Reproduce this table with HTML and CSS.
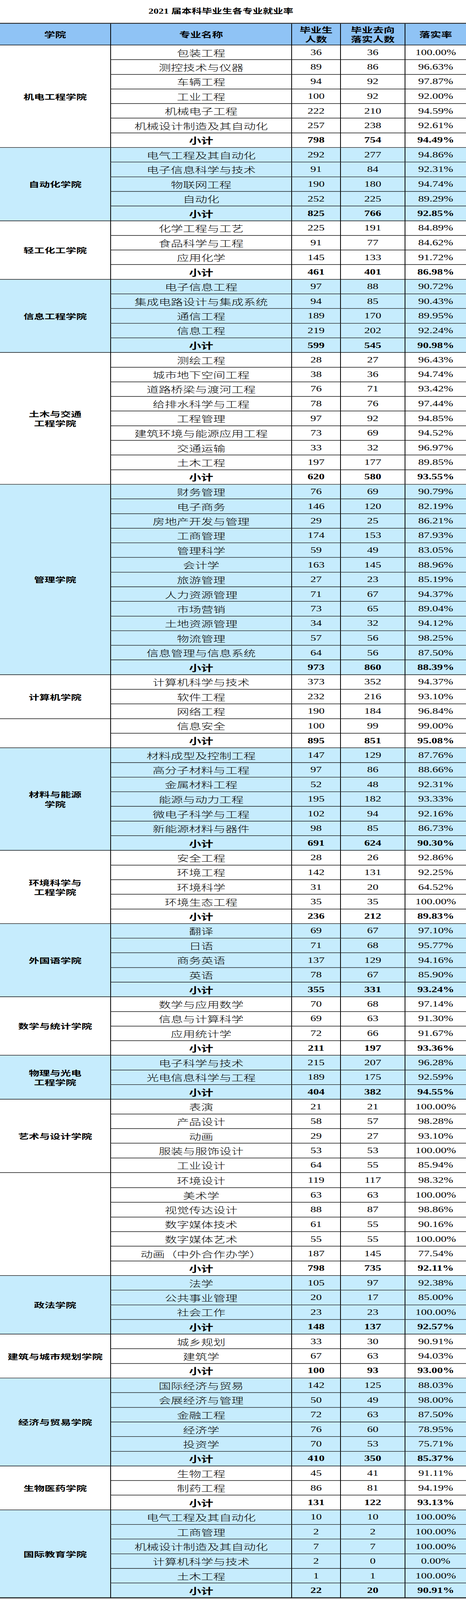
FILE: index.html
```html
<!DOCTYPE html>
<html lang="zh-CN">
<head>
<meta charset="utf-8">
<title>2021 届本科毕业生各专业就业率</title>
<link rel="stylesheet" href="styles.css">
</head>
<body>
<div class="frame">
<div class="page">
  <h1 class="title">2021 届本科毕业生各专业就业率</h1>
  <table class="grid">
    <colgroup>
      <col class="w1"><col class="w2"><col class="w3"><col class="w4"><col class="w5">
    </colgroup>
    <thead>
      <tr class="head">
        <th class="h-college">学院</th>
        <th>专业名称</th>
        <th>毕业生<br>人数</th>
        <th>毕业去向<br>落实人数</th>
        <th>落实率</th>
      </tr>
    </thead>
    <tbody>
      <tr><td class="college" rowspan="7">机电工程学院</td><td class="major">包装工程</td><td class="n">36</td><td class="n">36</td><td class="n">100.00%</td></tr>
      <tr><td class="major">测控技术与仪器</td><td class="n">89</td><td class="n">86</td><td class="n">96.63%</td></tr>
      <tr><td class="major">车辆工程</td><td class="n">94</td><td class="n">92</td><td class="n">97.87%</td></tr>
      <tr><td class="major">工业工程</td><td class="n">100</td><td class="n">92</td><td class="n">92.00%</td></tr>
      <tr><td class="major">机械电子工程</td><td class="n">222</td><td class="n">210</td><td class="n">94.59%</td></tr>
      <tr><td class="major">机械设计制造及其自动化</td><td class="n">257</td><td class="n">238</td><td class="n">92.61%</td></tr>
      <tr class="sub"><td class="major">小计</td><td class="n">798</td><td class="n">754</td><td class="n">94.49%</td></tr>

      <tr class="c"><td class="college" rowspan="5">自动化学院</td><td class="major">电气工程及其自动化</td><td class="n">292</td><td class="n">277</td><td class="n">94.86%</td></tr>
      <tr class="c"><td class="major">电子信息科学与技术</td><td class="n">91</td><td class="n">84</td><td class="n">92.31%</td></tr>
      <tr class="c"><td class="major">物联网工程</td><td class="n">190</td><td class="n">180</td><td class="n">94.74%</td></tr>
      <tr class="c"><td class="major">自动化</td><td class="n">252</td><td class="n">225</td><td class="n">89.29%</td></tr>
      <tr class="c sub"><td class="major">小计</td><td class="n">825</td><td class="n">766</td><td class="n">92.85%</td></tr>

      <tr><td class="college" rowspan="4">轻工化工学院</td><td class="major">化学工程与工艺</td><td class="n">225</td><td class="n">191</td><td class="n">84.89%</td></tr>
      <tr><td class="major">食品科学与工程</td><td class="n">91</td><td class="n">77</td><td class="n">84.62%</td></tr>
      <tr><td class="major">应用化学</td><td class="n">145</td><td class="n">133</td><td class="n">91.72%</td></tr>
      <tr class="sub"><td class="major">小计</td><td class="n">461</td><td class="n">401</td><td class="n">86.98%</td></tr>

      <tr class="c"><td class="college" rowspan="5">信息工程学院</td><td class="major">电子信息工程</td><td class="n">97</td><td class="n">88</td><td class="n">90.72%</td></tr>
      <tr class="c"><td class="major">集成电路设计与集成系统</td><td class="n">94</td><td class="n">85</td><td class="n">90.43%</td></tr>
      <tr class="c"><td class="major">通信工程</td><td class="n">189</td><td class="n">170</td><td class="n">89.95%</td></tr>
      <tr class="c"><td class="major">信息工程</td><td class="n">219</td><td class="n">202</td><td class="n">92.24%</td></tr>
      <tr class="c sub"><td class="major">小计</td><td class="n">599</td><td class="n">545</td><td class="n">90.98%</td></tr>

      <tr><td class="college" rowspan="9">土木与交通<br>工程学院</td><td class="major">测绘工程</td><td class="n">28</td><td class="n">27</td><td class="n">96.43%</td></tr>
      <tr><td class="major">城市地下空间工程</td><td class="n">38</td><td class="n">36</td><td class="n">94.74%</td></tr>
      <tr><td class="major">道路桥梁与渡河工程</td><td class="n">76</td><td class="n">71</td><td class="n">93.42%</td></tr>
      <tr><td class="major">给排水科学与工程</td><td class="n">78</td><td class="n">76</td><td class="n">97.44%</td></tr>
      <tr><td class="major">工程管理</td><td class="n">97</td><td class="n">92</td><td class="n">94.85%</td></tr>
      <tr><td class="major">建筑环境与能源应用工程</td><td class="n">73</td><td class="n">69</td><td class="n">94.52%</td></tr>
      <tr><td class="major">交通运输</td><td class="n">33</td><td class="n">32</td><td class="n">96.97%</td></tr>
      <tr><td class="major">土木工程</td><td class="n">197</td><td class="n">177</td><td class="n">89.85%</td></tr>
      <tr class="sub"><td class="major">小计</td><td class="n">620</td><td class="n">580</td><td class="n">93.55%</td></tr>

      <tr class="c"><td class="college" rowspan="13">管理学院</td><td class="major">财务管理</td><td class="n">76</td><td class="n">69</td><td class="n">90.79%</td></tr>
      <tr class="c"><td class="major">电子商务</td><td class="n">146</td><td class="n">120</td><td class="n">82.19%</td></tr>
      <tr class="c"><td class="major">房地产开发与管理</td><td class="n">29</td><td class="n">25</td><td class="n">86.21%</td></tr>
      <tr class="c"><td class="major">工商管理</td><td class="n">174</td><td class="n">153</td><td class="n">87.93%</td></tr>
      <tr class="c"><td class="major">管理科学</td><td class="n">59</td><td class="n">49</td><td class="n">83.05%</td></tr>
      <tr class="c"><td class="major">会计学</td><td class="n">163</td><td class="n">145</td><td class="n">88.96%</td></tr>
      <tr class="c"><td class="major">旅游管理</td><td class="n">27</td><td class="n">23</td><td class="n">85.19%</td></tr>
      <tr class="c"><td class="major">人力资源管理</td><td class="n">71</td><td class="n">67</td><td class="n">94.37%</td></tr>
      <tr class="c"><td class="major">市场营销</td><td class="n">73</td><td class="n">65</td><td class="n">89.04%</td></tr>
      <tr class="c"><td class="major">土地资源管理</td><td class="n">34</td><td class="n">32</td><td class="n">94.12%</td></tr>
      <tr class="c"><td class="major">物流管理</td><td class="n">57</td><td class="n">56</td><td class="n">98.25%</td></tr>
      <tr class="c"><td class="major">信息管理与信息系统</td><td class="n">64</td><td class="n">56</td><td class="n">87.50%</td></tr>
      <tr class="c sub"><td class="major">小计</td><td class="n">973</td><td class="n">860</td><td class="n">88.39%</td></tr>

      <tr><td class="college" rowspan="3">计算机学院</td><td class="major">计算机科学与技术</td><td class="n">373</td><td class="n">352</td><td class="n">94.37%</td></tr>
      <tr><td class="major">软件工程</td><td class="n">232</td><td class="n">216</td><td class="n">93.10%</td></tr>
      <tr><td class="major">网络工程</td><td class="n">190</td><td class="n">184</td><td class="n">96.84%</td></tr>
      <tr><td class="college" rowspan="2"></td><td class="major">信息安全</td><td class="n">100</td><td class="n">99</td><td class="n">99.00%</td></tr>
      <tr class="sub"><td class="major">小计</td><td class="n">895</td><td class="n">851</td><td class="n">95.08%</td></tr>

      <tr class="c"><td class="college" rowspan="7">材料与能源<br>学院</td><td class="major">材料成型及控制工程</td><td class="n">147</td><td class="n">129</td><td class="n">87.76%</td></tr>
      <tr class="c"><td class="major">高分子材料与工程</td><td class="n">97</td><td class="n">86</td><td class="n">88.66%</td></tr>
      <tr class="c"><td class="major">金属材料工程</td><td class="n">52</td><td class="n">48</td><td class="n">92.31%</td></tr>
      <tr class="c"><td class="major">能源与动力工程</td><td class="n">195</td><td class="n">182</td><td class="n">93.33%</td></tr>
      <tr class="c"><td class="major">微电子科学与工程</td><td class="n">102</td><td class="n">94</td><td class="n">92.16%</td></tr>
      <tr class="c"><td class="major">新能源材料与器件</td><td class="n">98</td><td class="n">85</td><td class="n">86.73%</td></tr>
      <tr class="c sub"><td class="major">小计</td><td class="n">691</td><td class="n">624</td><td class="n">90.30%</td></tr>

      <tr><td class="college" rowspan="5">环境科学与<br>工程学院</td><td class="major">安全工程</td><td class="n">28</td><td class="n">26</td><td class="n">92.86%</td></tr>
      <tr><td class="major">环境工程</td><td class="n">142</td><td class="n">131</td><td class="n">92.25%</td></tr>
      <tr><td class="major">环境科学</td><td class="n">31</td><td class="n">20</td><td class="n">64.52%</td></tr>
      <tr><td class="major">环境生态工程</td><td class="n">35</td><td class="n">35</td><td class="n">100.00%</td></tr>
      <tr class="sub"><td class="major">小计</td><td class="n">236</td><td class="n">212</td><td class="n">89.83%</td></tr>

      <tr class="c"><td class="college" rowspan="5">外国语学院</td><td class="major">翻译</td><td class="n">69</td><td class="n">67</td><td class="n">97.10%</td></tr>
      <tr class="c"><td class="major">日语</td><td class="n">71</td><td class="n">68</td><td class="n">95.77%</td></tr>
      <tr class="c"><td class="major">商务英语</td><td class="n">137</td><td class="n">129</td><td class="n">94.16%</td></tr>
      <tr class="c"><td class="major">英语</td><td class="n">78</td><td class="n">67</td><td class="n">85.90%</td></tr>
      <tr class="c sub"><td class="major">小计</td><td class="n">355</td><td class="n">331</td><td class="n">93.24%</td></tr>

      <tr><td class="college" rowspan="4">数学与统计学院</td><td class="major">数学与应用数学</td><td class="n">70</td><td class="n">68</td><td class="n">97.14%</td></tr>
      <tr><td class="major">信息与计算科学</td><td class="n">69</td><td class="n">63</td><td class="n">91.30%</td></tr>
      <tr><td class="major">应用统计学</td><td class="n">72</td><td class="n">66</td><td class="n">91.67%</td></tr>
      <tr class="sub"><td class="major">小计</td><td class="n">211</td><td class="n">197</td><td class="n">93.36%</td></tr>

      <tr class="c"><td class="college" rowspan="3">物理与光电<br>工程学院</td><td class="major">电子科学与技术</td><td class="n">215</td><td class="n">207</td><td class="n">96.28%</td></tr>
      <tr class="c"><td class="major">光电信息科学与工程</td><td class="n">189</td><td class="n">175</td><td class="n">92.59%</td></tr>
      <tr class="c sub"><td class="major">小计</td><td class="n">404</td><td class="n">382</td><td class="n">94.55%</td></tr>

      <tr><td class="college" rowspan="5">艺术与设计学院</td><td class="major">表演</td><td class="n">21</td><td class="n">21</td><td class="n">100.00%</td></tr>
      <tr><td class="major">产品设计</td><td class="n">58</td><td class="n">57</td><td class="n">98.28%</td></tr>
      <tr><td class="major">动画</td><td class="n">29</td><td class="n">27</td><td class="n">93.10%</td></tr>
      <tr><td class="major">服装与服饰设计</td><td class="n">53</td><td class="n">53</td><td class="n">100.00%</td></tr>
      <tr><td class="major">工业设计</td><td class="n">64</td><td class="n">55</td><td class="n">85.94%</td></tr>
      <tr class="break"><td class="college" rowspan="7"></td><td class="major">环境设计</td><td class="n">119</td><td class="n">117</td><td class="n">98.32%</td></tr>
      <tr><td class="major">美术学</td><td class="n">63</td><td class="n">63</td><td class="n">100.00%</td></tr>
      <tr><td class="major">视觉传达设计</td><td class="n">88</td><td class="n">87</td><td class="n">98.86%</td></tr>
      <tr><td class="major">数字媒体技术</td><td class="n">61</td><td class="n">55</td><td class="n">90.16%</td></tr>
      <tr><td class="major">数字媒体艺术</td><td class="n">55</td><td class="n">55</td><td class="n">100.00%</td></tr>
      <tr><td class="major">动画（中外合作办学）</td><td class="n">187</td><td class="n">145</td><td class="n">77.54%</td></tr>
      <tr class="sub"><td class="major">小计</td><td class="n">798</td><td class="n">735</td><td class="n">92.11%</td></tr>

      <tr class="c"><td class="college" rowspan="4">政法学院</td><td class="major">法学</td><td class="n">105</td><td class="n">97</td><td class="n">92.38%</td></tr>
      <tr class="c"><td class="major">公共事业管理</td><td class="n">20</td><td class="n">17</td><td class="n">85.00%</td></tr>
      <tr class="c"><td class="major">社会工作</td><td class="n">23</td><td class="n">23</td><td class="n">100.00%</td></tr>
      <tr class="c sub"><td class="major">小计</td><td class="n">148</td><td class="n">137</td><td class="n">92.57%</td></tr>

      <tr><td class="college" rowspan="3">建筑与城市规划学院</td><td class="major">城乡规划</td><td class="n">33</td><td class="n">30</td><td class="n">90.91%</td></tr>
      <tr><td class="major">建筑学</td><td class="n">67</td><td class="n">63</td><td class="n">94.03%</td></tr>
      <tr class="sub"><td class="major">小计</td><td class="n">100</td><td class="n">93</td><td class="n">93.00%</td></tr>

      <tr class="c"><td class="college" rowspan="6">经济与贸易学院</td><td class="major">国际经济与贸易</td><td class="n">142</td><td class="n">125</td><td class="n">88.03%</td></tr>
      <tr class="c"><td class="major">会展经济与管理</td><td class="n">50</td><td class="n">49</td><td class="n">98.00%</td></tr>
      <tr class="c"><td class="major">金融工程</td><td class="n">72</td><td class="n">63</td><td class="n">87.50%</td></tr>
      <tr class="c"><td class="major">经济学</td><td class="n">76</td><td class="n">60</td><td class="n">78.95%</td></tr>
      <tr class="c"><td class="major">投资学</td><td class="n">70</td><td class="n">53</td><td class="n">75.71%</td></tr>
      <tr class="c sub"><td class="major">小计</td><td class="n">410</td><td class="n">350</td><td class="n">85.37%</td></tr>

      <tr><td class="college" rowspan="3">生物医药学院</td><td class="major">生物工程</td><td class="n">45</td><td class="n">41</td><td class="n">91.11%</td></tr>
      <tr><td class="major">制药工程</td><td class="n">86</td><td class="n">81</td><td class="n">94.19%</td></tr>
      <tr class="sub"><td class="major">小计</td><td class="n">131</td><td class="n">122</td><td class="n">93.13%</td></tr>

      <tr class="c"><td class="college" rowspan="6">国际教育学院</td><td class="major">电气工程及其自动化</td><td class="n">10</td><td class="n">10</td><td class="n">100.00%</td></tr>
      <tr class="c"><td class="major">工商管理</td><td class="n">2</td><td class="n">2</td><td class="n">100.00%</td></tr>
      <tr class="c"><td class="major">机械设计制造及其自动化</td><td class="n">7</td><td class="n">7</td><td class="n">100.00%</td></tr>
      <tr class="c"><td class="major">计算机科学与技术</td><td class="n">2</td><td class="n">0</td><td class="n">0.00%</td></tr>
      <tr class="c"><td class="major">土木工程</td><td class="n">1</td><td class="n">1</td><td class="n">100.00%</td></tr>
      <tr class="c sub"><td class="major">小计</td><td class="n">22</td><td class="n">20</td><td class="n">90.91%</td></tr>
    </tbody>
  </table>
</div>
</div>
</body>
</html>
```

FILE: styles.css
```css
html, body {
  margin: 0;
  padding: 0;
  background: #ffffff;
}

body {
  font-family: "Liberation Serif", "Noto Sans CJK SC", serif;
  color: #000000;
}

/* the capture window is 4096px tall; the 5933px-tall sheet is fitted into it */
.frame {
  width: 1192px;
  height: 4096px;
  overflow: hidden;
}

.page {
  width: 1192px;
  height: 5933px;
  transform: scaleY(0.69038);
  transform-origin: 0 0;
}

.title {
  width: 1130px;
  height: 85px;
  margin: 0;
  line-height: 85px;
  text-align: center;
  font-size: 26px;
  font-weight: 700;
  font-family: "Liberation Serif", "Noto Sans CJK SC", serif;
}

.grid {
  width: 1192px;
  table-layout: fixed;
  border-collapse: separate;
  border-spacing: 0;
  border-top: 3px solid #000000;
  border-bottom: 2px solid #000000;
}

.w1 { width: 282px; }
.w2 { width: 463px; }
.w3 { width: 125px; }
.w4 { width: 165px; }
.w5 { width: 157px; }

.grid th,
.grid td {
  padding: 0;
  text-align: center;
  vertical-align: middle;
  border-left: 2px solid #000000;
  border-bottom: 2px solid #000000;
}

.grid .h-college,
.grid .college {
  border-left: none;
}

.head {
  height: 80px;
}

.head th {
  background: #8fc3f5;
  font-family: "Noto Sans CJK SC", sans-serif;
  font-weight: 700;
  font-size: 28px;
  line-height: 36px;
}

.grid tbody tr {
  height: 54.3px;
}

.grid tbody tr.break {
  height: 56.3px;
}

.c td {
  background: #c6ecfd;
}

.college {
  font-family: "Noto Sans CJK SC", sans-serif;
  font-weight: 700;
  font-size: 27px;
  line-height: 35px;
}

.major {
  font-family: "Noto Sans CJK SC", sans-serif;
  font-weight: 300;
  font-size: 31px;
}

.n {
  font-family: "Liberation Serif", serif;
  font-size: 29px;
}

.sub td,
.sub .major {
  font-weight: 700;
}
```
